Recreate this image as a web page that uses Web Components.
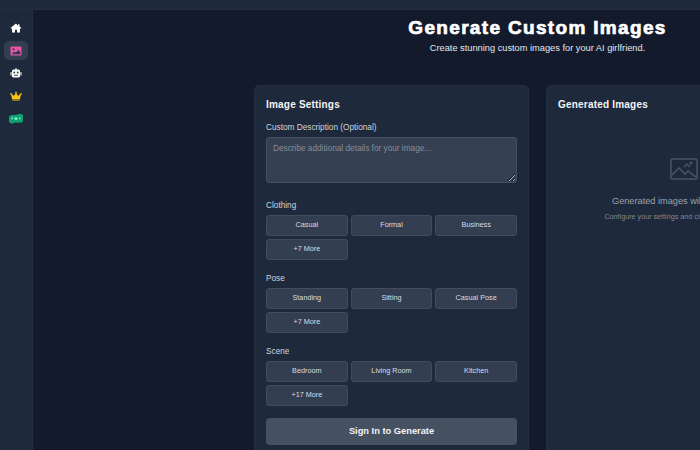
<!DOCTYPE html>
<html>
<head>
<meta charset="utf-8">
<title>Generate Custom Images</title>
<style>
  html, body { margin: 0; height: 100%; overflow: hidden; background: #131a2b; }
  body { font-family: "Liberation Sans", Arial, sans-serif; }
</style>
</head>
<body>
<app-shell>
  <side-nav slot="nav"></side-nav>
  <page-head title-text="Generate Custom Images" sub="Create stunning custom images for your AI girlfriend."></page-head>
  <div style="display:grid;grid-template-columns:275px 275px;gap:17px">
    <settings-panel heading="Image Settings">
      <label-field label="Custom Description (Optional)"><desc-box></desc-box></label-field>
      <option-group label="Clothing" options="Casual,Formal,Business,+7 More"></option-group>
      <option-group label="Pose" options="Standing,Sitting,Casual Pose,+7 More"></option-group>
      <option-group label="Scene" options="Bedroom,Living Room,Kitchen,+17 More"></option-group>
      <generate-button>Sign In to Generate</generate-button>
    </settings-panel>
    <settings-panel heading="Generated Images">
      <empty-state></empty-state>
    </settings-panel>
  </div>
</app-shell>

<script>
class AppShell extends HTMLElement {
  constructor() {
    super();
    this.attachShadow({mode: 'open'}).innerHTML = `<style>
      :host { display: flex; flex-direction: column; width: 700px; height: 450px; overflow: hidden;
        background: #131a2b; }
      .top { flex: 0 0 10px; background: #1e293b; border-bottom: 1px solid #253044; box-sizing: border-box; }
      .row { flex: 1; display: flex; min-height: 0; }
      main { flex: 1; min-width: 0; padding: 0 0 0 221px; background: #131a2b; }
      .inner { width: 567px; }
    </style>
    <div class="top"></div>
    <div class="row">
      <slot name="nav"></slot>
      <main><div class="inner"><slot></slot></div></main>
    </div>`;
  }
}

const navIcons = {
  home: `<svg viewBox="0 0 24 20" width="12" height="10"><path fill="#fff" d="M12 1 1 10.2l1.3 1.4L4 10.2V19h6v-5.5h4V19h6v-8.8l1.7 1.4 1.3-1.4-4-3.3V2.5h-3v2.8z"/></svg>`,
  image: `<svg viewBox="0 0 24 20" width="12" height="10"><rect x="1" y="1" width="22" height="18" rx="2" fill="#e455a8"/><circle cx="7" cy="6.5" r="2" fill="#2d3646"/><path fill="#2d3646" d="M3.5 16.5 9 11l2.5 2.5L17 8l3.5 4v4.500z"/></svg>`,
  robot: `<svg viewBox="0 0 24 20" width="12" height="10"><path fill="#fff" d="M11 0h2v3h4a3 3 0 0 1 3 3v10a3 3 0 0 1-3 3H7a3 3 0 0 1-3-3V6a3 3 0 0 1 3-3h4zM1 8h2v7H1zm20 0h2v7h-2z"/><circle cx="8.500" cy="9" r="1.800" fill="#2a3445"/><circle cx="15.500" cy="9" r="1.800" fill="#2a3445"/><rect x="8" y="13.500" width="8" height="1.800" fill="#2a3445"/></svg>`,
  crown: `<svg viewBox="0 0 24 20" width="12" height="10"><path fill="#f5c518" d="M12 1.500a1.800 1.800 0 0 1 1 3.300l3 4.700 4-2.700a1.800 1.800 0 1 1 1.500 1L20 16H4L2.500 7.800a1.800 1.800 0 1 1 1.500-1l4 2.700 3-4.700a1.800 1.800 0 0 1 1-3.300zM4.500 17h15v2h-15z"/></svg>`,
  money: `<svg viewBox="0 0 28 22" width="14" height="11"><path fill="#0f9f72" d="M1 6C6 2 10 5 14 4s9-4 13-1c1 .7 1 1 1 2v11c0 1-.3 1.400-1 2-5 3-9 0-13 1S5 23 1 19c-.7-.7-1-1-1-2V8c0-1 .3-1.500 1-2z"/><path fill="#7debc4" d="M14 8a3.200 3.200 0 1 1 0 6.400A3.200 3.200 0 0 1 14 8zM5 9h3v3.500H5zm15 0h3v3.500h-3z"/></svg>`
};

class SideNav extends HTMLElement {
  constructor() {
    super();
    const items = [['home', 0], ['image', 1], ['robot', 0], ['crown', 0], ['money', 0]];
    const html = items.map(i => `<a class="${i[1] ? 'active' : ''}">${navIcons[i[0]]}</a>`).join('');
    this.attachShadow({mode: 'open'}).innerHTML = `<style>
      :host { display: block; flex: 0 0 33px; box-sizing: border-box; background: #1e293b;
        border-right: 1px solid #222d40; padding: 8.5px 4px 0 4px; }
      nav { display: flex; flex-direction: column; gap: 3.5px; }
      a { display: flex; align-items: center; justify-content: center; height: 19px; border-radius: 5px; }
      .active { background: #333e50; }
    </style><nav>${html}</nav>`;
  }
}

class PageHead extends HTMLElement {
  constructor() {
    super();
    this.attachShadow({mode: 'open'}).innerHTML = `<style>
      :host { display: block; text-align: center; color: #fff; height: 75px; box-sizing: border-box; padding-top: 8px; }
      h1 { margin: 0; font-size: 19px; line-height: 19px; font-weight: 700; letter-spacing: 1.33px;
        -webkit-text-stroke: 0.7px #fff; }
      p { margin: 5px 0 0; font-size: 9.25px; line-height: 12px; color: #e5e7eb; }
    </style><h1>${this.getAttribute('title-text')}</h1><p>${this.getAttribute('sub')}</p>`;
  }
}

class SettingsPanel extends HTMLElement {
  constructor() {
    super();
    this.attachShadow({mode: 'open'}).innerHTML = `<style>
      :host { display: block; box-sizing: border-box; height: 400px; padding: 12px 11px 0; background: #1e293b;
        border: 1px solid #232e41; border-radius: 5px; }
      h2 { margin: 0 0 11px; font-size: 10px; line-height: 13px; font-weight: 700; color: #f3f4f6; letter-spacing: 0.2px; }
    </style><h2>${this.getAttribute('heading')}</h2><slot></slot>`;
  }
}

class LabelField extends HTMLElement {
  constructor() {
    super();
    this.attachShadow({mode: 'open'}).innerHTML = `<style>
      :host { display: block; margin-bottom: 17px; }
      div { font-size: 8.25px; line-height: 11px; color: #d1d5db; margin-bottom: 4px; }
    </style><div>${this.getAttribute('label')}</div><slot></slot>`;
  }
}

class DescBox extends HTMLElement {
  constructor() {
    super();
    this.attachShadow({mode: 'open'}).innerHTML = `<style>
      :host { display: block; }
      textarea { display: block; box-sizing: border-box; width: 100%; height: 46px; padding: 5px 6px; margin: 0;
        font: 8.25px/11px "Liberation Sans", Arial, sans-serif; color: #fff;
        background: #354052; border: 1px solid #465061; border-radius: 3px; outline: none; }
      textarea::placeholder { color: #858d9b; opacity: 1; }
    </style><textarea placeholder="Describe additional details for your image..."></textarea>`;
  }
}

class OptionGroup extends HTMLElement {
  constructor() {
    super();
    const btns = this.getAttribute('options').split(',').map(o => `<button>${o}</button>`).join('');
    this.attachShadow({mode: 'open'}).innerHTML = `<style>
      :host { display: block; margin-bottom: 13.5px; }
      .lbl { font-size: 8.25px; line-height: 11px; color: #d1d5db; margin-bottom: 4px; }
      .grid { display: grid; grid-template-columns: repeat(3, 1fr); gap: 3.5px 3px; }
      button { height: 20.5px; padding: 0 0 2px; font: 7.25px "Liberation Sans", Arial, sans-serif; color: #d9dde3;
        background: #333e50; border: 1px solid #414c5d; border-radius: 3px; }
    </style><div class="lbl">${this.getAttribute('label')}</div><div class="grid">${btns}</div>`;
  }
}

class GenerateButton extends HTMLElement {
  constructor() {
    super();
    this.attachShadow({mode: 'open'}).innerHTML = `<style>
      :host { display: block; margin-top: -1px; }
      button { display: block; width: 100%; height: 27px; padding: 0 0 2px; font: 700 9.3px "Liberation Sans", Arial, sans-serif;
        color: #f3f4f6; background: #465162; border: 0; border-radius: 4px; }
    </style><button><slot></slot></button>`;
  }
}

class EmptyState extends HTMLElement {
  constructor() {
    super();
    this.attachShadow({mode: 'open'}).innerHTML = `<style>
      :host { display: flex; flex-direction: column; align-items: center; padding-top: 36px; }
      svg { display: block; margin-bottom: 15px; }
      .a { font-size: 9.2px; line-height: 13px; color: #9ca3af; white-space: nowrap; }
      .b { font-size: 7.2px; line-height: 10px; color: #7f8896; margin-top: 3.5px; white-space: nowrap; }
    </style>
    <svg viewBox="0 0 28 22" width="28" height="22" fill="none" stroke="#4b5563" stroke-width="1.500">
      <rect x="1" y="1" width="26" height="20" rx="1.500"/>
      <path d="M2 17 9 10l6 6 3-3 8 6"/>
      <path d="M14 9l3-3 3 3"/>
      <circle cx="21" cy="5" r="0.800"/>
    </svg>
    <div class="a">Generated images will appear here</div>
    <div class="b">Configure your settings and click generate to start</div>`;
  }
}

customElements.define('app-shell', AppShell);
customElements.define('side-nav', SideNav);
customElements.define('page-head', PageHead);
customElements.define('settings-panel', SettingsPanel);
customElements.define('label-field', LabelField);
customElements.define('desc-box', DescBox);
customElements.define('option-group', OptionGroup);
customElements.define('generate-button', GenerateButton);
customElements.define('empty-state', EmptyState);
</script>
</body>
</html>
